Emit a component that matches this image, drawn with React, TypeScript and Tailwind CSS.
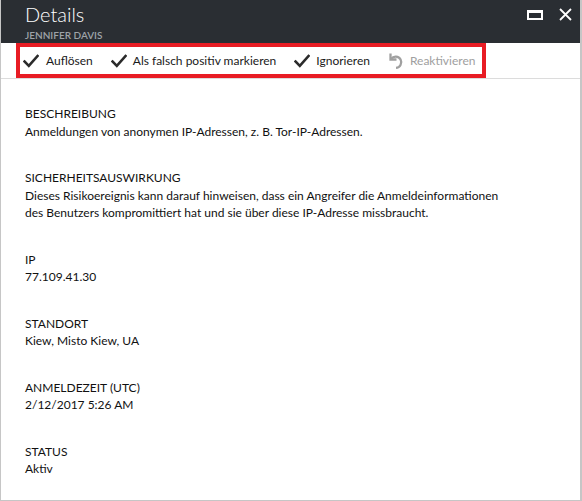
import React from 'react';

const font = { fontFamily: 'Lato, "Liberation Sans", sans-serif' };

function Check() {
    return (
        <svg width="16" height="14" viewBox="0 0 16 14" className="shrink-0">
            <path d="M1.5 7.5 L5.8 11.8 L14.5 2" fill="none" stroke="#2b2b2b" strokeWidth="2.6" strokeLinecap="square" />
        </svg>
    );
}

function Undo() {
    return (
        <svg width="17" height="17" viewBox="0 0 17 17" className="shrink-0">
            <path d="M2.5 1.5 V7.5 H8.5" fill="none" stroke="#a0a0a0" strokeWidth="2.3" />
            <path d="M3.2 6.8 A5.6 5.6 0 1 1 8 15.8" fill="none" stroke="#a0a0a0" strokeWidth="2.3" />
        </svg>
    );
}

const sections = [
    { label: 'BESCHREIBUNG', value: ['Anmeldungen von anonymen IP-Adressen, z. B. Tor-IP-Adressen.'] },
    {
        label: 'SICHERHEITSAUSWIRKUNG',
        value: [
            'Dieses Risikoereignis kann darauf hinweisen, dass ein Angreifer die Anmeldeinformationen',
            'des Benutzers kompromittiert hat und sie über diese IP-Adresse missbraucht.',
        ],
    },
    { label: 'IP', value: ['77.109.41.30'] },
    { label: 'STANDORT', value: ['Kiew, Misto Kiew, UA'] },
    { label: 'ANMELDEZEIT (UTC)', value: ['2/12/2017 5:26 AM'] },
    { label: 'STATUS', value: ['Aktiv'] },
];

export default function App() {
    return (
        <div className="w-[582px] h-[501px] bg-white border-l border-r-2 border-b border-[#c6c6c6] flex flex-col overflow-hidden" style={font}>
            <header className="h-[43px] bg-[#2a2e33] flex items-start justify-between pl-[24px] pr-[8px] shrink-0">
                <div className="pt-[2px]">
                    <div className="text-[20px] font-light text-white leading-[24px]">Details</div>
                    <div className="text-[10px] font-semibold text-[#9ea3a8] leading-[12px] mt-[3px]">JENNIFER DAVIS</div>
                </div>
                <div className="flex items-center gap-[16px] pt-[8px]">
                    <div className="w-[16px] h-[10px] border-2 border-t-[3px] border-white" />
                    <svg width="13" height="13" viewBox="0 0 13 13">
                        <path d="M1 1 L12 12 M12 1 L1 12" stroke="white" strokeWidth="1.8" />
                    </svg>
                </div>
            </header>

            <div className="h-[36px] border-b border-[#dcdcdc] shrink-0">
                <div className="ml-[15px] w-[470px] h-[35px] border-4 border-[#e81c24] flex items-center pl-[3px] gap-[18px] text-[12px] text-[#1a1a1a] whitespace-nowrap">
                    <div className="flex items-center gap-[7px]"><Check /><span>Auflösen</span></div>
                    <div className="flex items-center gap-[6px]"><Check /><span>Als falsch positiv markieren</span></div>
                    <div className="flex items-center gap-[6px]"><Check /><span>Ignorieren</span></div>
                    <div className="flex items-center gap-[5px] text-[#a0a0a0]"><Undo /><span>Reaktivieren</span></div>
                </div>
            </div>

            <div className="pl-[24px] pt-[26px] flex flex-col gap-[29px] text-[12px] text-[#111] leading-[17.5px] whitespace-nowrap">
                {sections.map((s) => (
                    <div key={s.label}>
                        <div>{s.label}</div>
                        {s.value.map((v) => (
                            <div key={v}>{v}</div>
                        ))}
                    </div>
                ))}
            </div>
        </div>
    );
}
